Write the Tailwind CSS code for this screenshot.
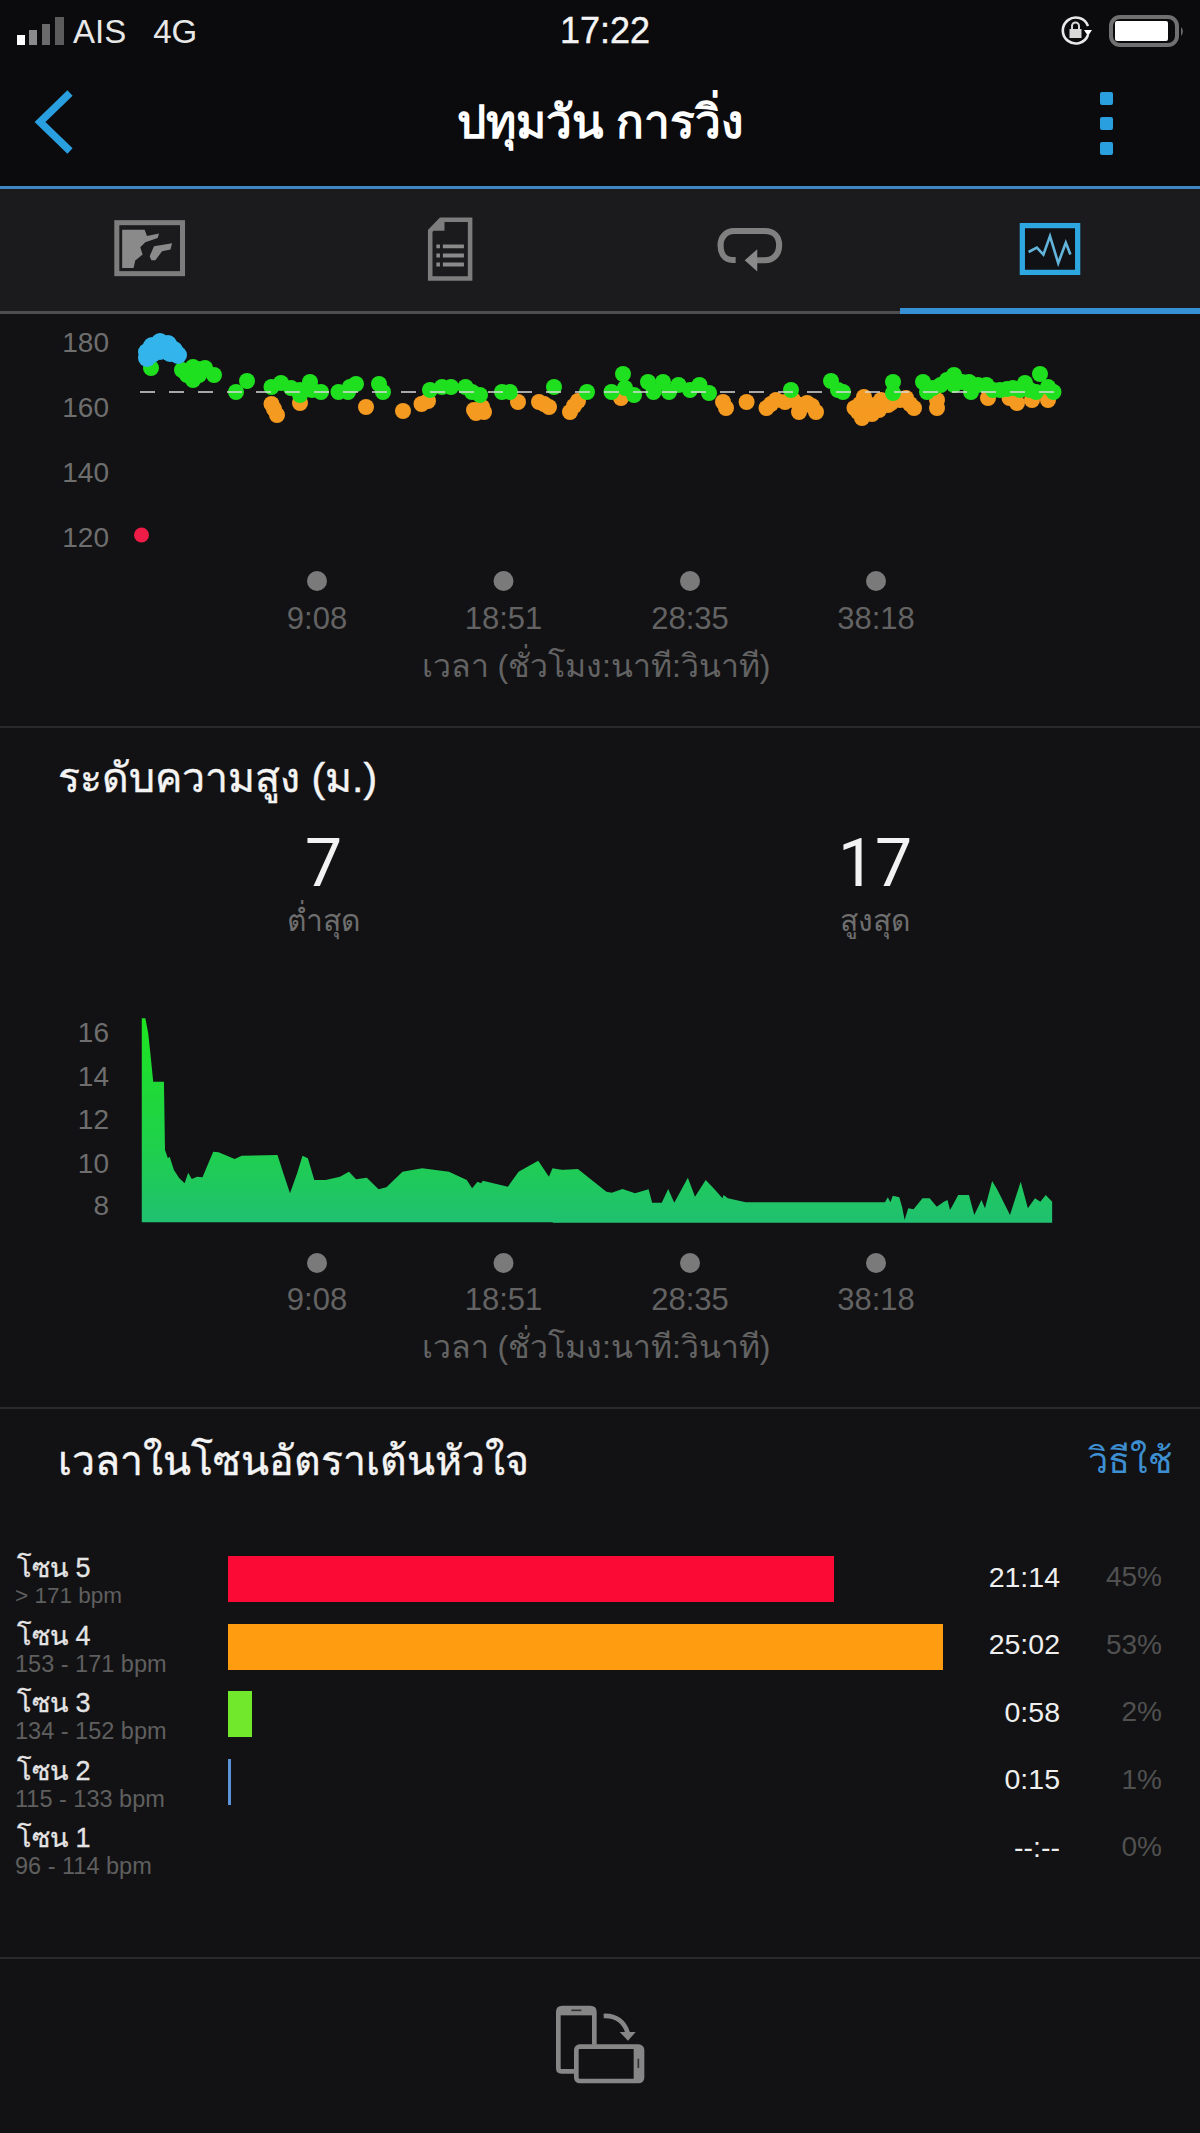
<!doctype html>
<html><head><meta charset="utf-8"><script src="https://cdn.jsdelivr.net/npm/@tailwindcss/browser@4"></script></head>
<body class="bg-[#121214] text-white font-['Liberation_Sans',sans-serif]">
<div class="w-[1200px] h-[2133px] overflow-hidden">
<!-- status + header -->
<div class="bg-[#0b0b0d]">
  <div class="h-[62px] grid grid-cols-3 items-center">
    <div class="flex items-center pl-[17px]">
      <svg width="48" height="30" viewBox="0 0 48 30"><rect x="0" y="19" width="8" height="10" fill="#fff"/><rect x="12" y="14" width="8" height="15" fill="#8a8a8a"/><rect x="25" y="8" width="8" height="21" fill="#6b6b6b"/><rect x="38" y="1" width="9" height="28" fill="#5c5c5c"/></svg>
      <span class="ml-[8px] text-[33px] leading-none text-[#e8e8e8]">AIS</span>
      <span class="ml-[27px] text-[33px] leading-none text-[#e8e8e8]">4G</span>
    </div>
    <div class="text-center text-[36px] leading-none text-[#f4f4f4] pl-[10px] [-webkit-text-stroke:0.4px_#f4f4f4]">17:22</div>
    <div class="flex items-center justify-end pr-[14px] gap-[17px]">
      <svg width="32" height="32" viewBox="0 0 32 32"><path d="M28 20 A13 13 0 1 1 28 11" fill="none" stroke="#e8e8e8" stroke-width="2.6"/><path d="M24 15 L32 15 L28 21 Z" fill="#fff"/><rect x="9.5" y="14" width="12" height="9" fill="#d8d8d8"/><path d="M12 14 V11 A3.5 3.5 0 0 1 19 11 V14" fill="none" stroke="#d8d8d8" stroke-width="2"/></svg>
      <svg width="77" height="32" viewBox="0 0 77 32"><rect x="2" y="2" width="66" height="28" rx="9" fill="none" stroke="#707070" stroke-width="4"/><rect x="6" y="6" width="53" height="20" rx="2" fill="#fff"/><path d="M72 12 Q76 16 72 21 Z" fill="#6a6a6a"/></svg>
    </div>
  </div>
  <div class="h-[124px] relative flex items-center justify-center">
    <svg class="absolute left-[34px] top-[28px]" width="40" height="64" viewBox="0 0 40 64"><path d="M36 3 L6 32 L36 61" fill="none" stroke="#2a9fe0" stroke-width="7.5"/></svg>
    <div class="text-[46px] leading-none font-bold text-white -mt-[4px]">ปทุมวัน การวิ่ง</div>
    <div class="absolute left-[1100px] top-[30px] flex flex-col gap-[12px]">
      <div class="w-[13px] h-[13px] rounded-[2px] bg-[#2a9fe0]"></div><div class="w-[13px] h-[13px] rounded-[2px] bg-[#2a9fe0]"></div><div class="w-[13px] h-[13px] rounded-[2px] bg-[#2a9fe0]"></div>
    </div>
  </div>
</div>
<div class="h-[3px] bg-[#3f86c4]"></div>
<!-- tabs -->
<div class="h-[125px] grid grid-cols-4 bg-[#1b1b1d]">
  <div class="flex items-center justify-center border-b-[3px] border-[#4e4e50] pb-[3px]">
    <svg width="72" height="57" viewBox="44 44 214 170"><rect x="52" y="52" width="196" height="152" fill="none" stroke="#7d7d7d" stroke-width="15"/><path d="M68 73 L135 73 L142 92 L178 84 L174 98 L137 110 L122 125 L129 147 L107 165 L102 187 L68 187 Z" fill="#8a8a8a"/><path d="M150 152 L163 122 L217 113 L212 132 L187 137 L167 164 L155 164 Z" fill="#8a8a8a"/></svg>
  </div>
  <div class="flex items-center justify-center border-b-[3px] border-[#4e4e50] pb-[3px]">
    <svg width="48" height="68" viewBox="978 26 148 204"><path d="M991 72 L1024 38 H1114 V219 H991 Z" fill="none" stroke="#7d7d7d" stroke-width="14"/><path d="M985 72 L1035 72 L1035 32 Z" fill="#7d7d7d"/><path d="M1030 120 H1095 M1030 148 H1095 M1030 176 H1095" stroke="#8a8a8a" stroke-width="12"/><path d="M1010 120 H1021 M1010 148 H1021 M1010 176 H1021" stroke="#8a8a8a" stroke-width="12"/></svg>
  </div>
  <div class="flex items-center justify-center border-b-[3px] border-[#4e4e50] pb-[3px]">
    <svg width="66" height="48" viewBox="47 64 205 146"><path d="M105 171 H95 C70 171 58 150 58 125 C58 100 75 81 100 81 H195 C225 81 240 100 240 125 C240 150 225 172 195 172 H160" fill="none" stroke="#808080" stroke-width="19"/><path d="M133 172 L172 138 L172 207 Z" fill="#8a8a8a"/></svg>
  </div>
  <div class="flex items-center justify-center border-b-[6px] border-[#3590d6] pb-0">
    <svg width="64" height="54" viewBox="955 47 190 164"><rect x="966" y="58" width="168" height="142" fill="#0f1114" stroke="#2ea6e0" stroke-width="16"/><polyline points="985,138 1010,125 1030,146 1050,90 1075,172 1098,110 1112,146" fill="none" stroke="#62b4da" stroke-width="8"/></svg>
  </div>
</div>
<!-- heart-rate chart -->
<svg class="block" width="1200" height="412" viewBox="0 314 1200 412" font-family="'Liberation Sans',sans-serif">
  <g fill="#6e6e6e" font-size="28" text-anchor="end"><text x="109" y="352">180</text><text x="109" y="417">160</text><text x="109" y="482">140</text><text x="109" y="547">120</text></g>
  <g fill="#f59a20" class="[&>circle]:[r:8px]">
    <circle cx="271.5" cy="404" r="7"/><circle cx="277" cy="415" r="7"/><circle cx="274" cy="409" r="7"/><circle cx="300" cy="403" r="7"/><circle cx="366" cy="407" r="7"/><circle cx="403" cy="411" r="7.5"/><circle cx="421.5" cy="404" r="7"/><circle cx="428" cy="401" r="7"/><circle cx="474" cy="410" r="7.5"/><circle cx="482" cy="407" r="7.5"/><circle cx="476" cy="413" r="7"/><circle cx="484" cy="412" r="7"/><circle cx="518" cy="402" r="7"/><circle cx="539" cy="402" r="7"/><circle cx="544" cy="404" r="7"/><circle cx="549" cy="407" r="7"/><circle cx="570" cy="412" r="7"/><circle cx="574" cy="406" r="7"/><circle cx="578" cy="401" r="7"/><circle cx="621" cy="398" r="7"/><circle cx="723" cy="402" r="7"/><circle cx="726" cy="408" r="7"/><circle cx="746.6" cy="402" r="7"/><circle cx="766.5" cy="408" r="7"/><circle cx="771" cy="404" r="7"/><circle cx="776" cy="400" r="7"/><circle cx="793" cy="400" r="7"/><circle cx="799" cy="412" r="7"/><circle cx="807" cy="403" r="7"/><circle cx="816" cy="412" r="7"/><circle cx="800" cy="405" r="7"/><circle cx="812" cy="406" r="7"/><circle cx="785" cy="402" r="7"/><circle cx="854.5" cy="408" r="7"/><circle cx="862" cy="418" r="7"/><circle cx="858" cy="412" r="7"/><circle cx="864" cy="397" r="7"/><circle cx="868" cy="410" r="7.5"/><circle cx="860" cy="404" r="7"/><circle cx="866" cy="403" r="7"/><circle cx="872" cy="414" r="7"/><circle cx="879" cy="410" r="7"/><circle cx="881" cy="400" r="7"/><circle cx="875" cy="405" r="7"/><circle cx="888" cy="405" r="7"/><circle cx="891" cy="403" r="7"/><circle cx="900" cy="400" r="7"/><circle cx="906" cy="398" r="7"/><circle cx="910" cy="404" r="7"/><circle cx="914" cy="408" r="7"/><circle cx="937" cy="408" r="7"/><circle cx="937" cy="400" r="7"/><circle cx="988" cy="398" r="7"/><circle cx="1017" cy="403" r="7"/><circle cx="1009.5" cy="398" r="7"/><circle cx="1032" cy="400" r="7"/><circle cx="1048" cy="400" r="7"/>
  </g>
  <g fill="#1fe01f" class="[&>circle]:[r:8px]">
    <circle cx="151" cy="368" r="6"/><circle cx="182" cy="370" r="7"/><circle cx="193" cy="367" r="7"/><circle cx="205" cy="368" r="7"/><circle cx="214" cy="375" r="7"/><circle cx="193" cy="380" r="7"/><circle cx="187" cy="375" r="7"/><circle cx="199" cy="375" r="7"/><circle cx="190" cy="372" r="7"/><circle cx="198" cy="369" r="7"/>
    <circle cx="236" cy="392" r="7"/><circle cx="247" cy="381" r="7"/><circle cx="271.5" cy="387" r="7"/><circle cx="281" cy="383" r="7"/><circle cx="291" cy="388" r="7"/><circle cx="300" cy="390" r="7"/><circle cx="300" cy="395" r="7"/><circle cx="310" cy="382" r="7"/><circle cx="312" cy="390" r="7"/><circle cx="321" cy="392" r="7"/><circle cx="338.5" cy="392" r="7"/><circle cx="348" cy="392" r="7"/><circle cx="356" cy="384" r="7"/><circle cx="350" cy="387" r="7"/><circle cx="379" cy="384" r="7"/><circle cx="383" cy="392" r="7"/><circle cx="430" cy="390" r="7"/><circle cx="442" cy="387" r="7"/><circle cx="451" cy="387" r="7"/><circle cx="465.5" cy="387" r="7"/><circle cx="472" cy="392" r="7"/><circle cx="480" cy="395" r="7"/><circle cx="502" cy="392" r="7"/><circle cx="510" cy="392" r="7"/><circle cx="554" cy="387" r="7"/><circle cx="587" cy="392" r="7"/>
    <circle cx="611.5" cy="392" r="7"/><circle cx="623" cy="374" r="7"/><circle cx="625" cy="388" r="7"/><circle cx="634" cy="395" r="7"/><circle cx="648" cy="382" r="7"/><circle cx="653.5" cy="392" r="7"/><circle cx="663" cy="382" r="7"/><circle cx="669" cy="392" r="7"/><circle cx="678.5" cy="385" r="7"/><circle cx="690" cy="390" r="7"/><circle cx="699.5" cy="385" r="7"/><circle cx="709" cy="393" r="7"/><circle cx="791" cy="390" r="7"/><circle cx="831" cy="381" r="7"/><circle cx="838" cy="390" r="7"/><circle cx="843" cy="392" r="7"/><circle cx="893" cy="382" r="7"/><circle cx="893" cy="393" r="7"/><circle cx="923" cy="382" r="7"/><circle cx="927" cy="392" r="7"/><circle cx="933" cy="388" r="7"/><circle cx="940.6" cy="385" r="7"/><circle cx="947" cy="380" r="7"/><circle cx="954" cy="375" r="7"/><circle cx="954" cy="385" r="7"/><circle cx="962" cy="382" r="7"/><circle cx="969" cy="382" r="7"/><circle cx="971" cy="392" r="7"/><circle cx="978" cy="385" r="7"/><circle cx="986.5" cy="385" r="7"/><circle cx="993" cy="390" r="7"/><circle cx="1000" cy="390" r="7"/><circle cx="1007" cy="389" r="7"/><circle cx="1013" cy="388" r="7"/><circle cx="1025" cy="383" r="7"/><circle cx="1020" cy="390" r="7"/><circle cx="1030" cy="390" r="7"/><circle cx="1040" cy="374" r="7"/><circle cx="1036" cy="392" r="7"/><circle cx="1053.5" cy="392" r="7"/><circle cx="1048" cy="387" r="7"/>
  </g>
  <g fill="#33b5ec" class="[&>circle]:[r:9px]">
    <circle cx="147" cy="352" r="7"/><circle cx="147" cy="358" r="7"/><circle cx="152" cy="346" r="7"/><circle cx="160" cy="342" r="7"/><circle cx="168" cy="344" r="7"/><circle cx="174" cy="350" r="7"/><circle cx="178" cy="355" r="7"/><circle cx="160" cy="351" r="7"/><circle cx="170" cy="353" r="7"/><circle cx="152" cy="354" r="7"/>
  </g>
  <line x1="140" y1="392" x2="1062" y2="392" stroke="#d9d9d9" stroke-opacity=".75" stroke-width="2" stroke-dasharray="15 14"/>
  <circle cx="141.5" cy="535" r="7.5" fill="#ee1c46"/>
  <g fill="#7a7a7a"><circle cx="317" cy="581" r="10"/><circle cx="503.5" cy="581" r="10"/><circle cx="690" cy="581" r="10"/><circle cx="876" cy="581" r="10"/></g>
  <g fill="#636363" font-size="31" text-anchor="middle"><text x="317" y="629">9:08</text><text x="503.5" y="629">18:51</text><text x="690" y="629">28:35</text><text x="876" y="629">38:18</text><text x="596" y="677" font-size="32">เวลา (ชั่วโมง:นาที:วินาที)</text></g>
</svg>
<!-- elevation -->
<div class="border-t-[2px] border-[#2a2a2c]">
  <div class="h-[100px] flex items-center pl-[58px] text-[41px] leading-none text-[#f4f4f4] [-webkit-text-stroke:0.4px_#f4f4f4]">ระดับความสูง (ม.)</div>
  <div class="h-[122px] grid grid-cols-[647px_456px]">
    <div class="text-center"><div class="h-[64px] mt-[3px] flex items-center justify-center text-[66px] font-['Roboto',sans-serif] text-[#f2f2f2]">7</div><div class="mt-[3px] h-[44px] flex items-center justify-center text-[30px] text-[#6e6e6e]">ต่ำสุด</div></div>
    <div class="text-center"><div class="h-[64px] mt-[3px] flex items-center justify-center text-[66px] font-['Roboto',sans-serif] text-[#f2f2f2]">17</div><div class="mt-[3px] h-[44px] flex items-center justify-center text-[30px] text-[#6e6e6e]">สูงสุด</div></div>
  </div>
  <svg class="block" width="1200" height="457" viewBox="0 950 1200 457" font-family="'Liberation Sans',sans-serif">
    <defs>
      <linearGradient id="a1" gradientUnits="userSpaceOnUse" x1="0" y1="60" x2="0" y2="697"><stop offset="0" stop-color="#1ee61e"/><stop offset=".65" stop-color="#1fd04c"/><stop offset="1" stop-color="#20c070"/></linearGradient>
      <linearGradient id="a2" gradientUnits="userSpaceOnUse" x1="0" y1="-330" x2="0" y2="308"><stop offset="0" stop-color="#1ee61e"/><stop offset=".65" stop-color="#1fd04c"/><stop offset="1" stop-color="#20c070"/></linearGradient>
    </defs>
    <g fill="#6e6e6e" font-size="28" text-anchor="end"><text x="109" y="1042">16</text><text x="109" y="1086">14</text><text x="109" y="1129">12</text><text x="109" y="1173">10</text><text x="109" y="1215">8</text></g>
    <g transform="translate(40 990) scale(0.35714 0.33333)"><polygon fill="url(#a1)" points="285,697 285,85 295,85 303,130 310,200 317,275 347,275 350,480 358,505 363,500 375,540 390,565 405,580 415,548 425,567 440,560 455,562 485,485 500,487 545,507 565,497 665,495 680,545 700,610 720,550 735,497 750,505 768,570 800,570 840,560 865,545 885,568 915,563 948,598 970,592 1015,545 1070,535 1145,545 1195,570 1210,595 1225,575 1235,580 1240,572 1310,590 1340,545 1395,512 1425,560 1435,535 1480,543 1456,697"/></g>
    <g transform="translate(560 1120) scale(0.35714 0.33333)"><polygon fill="url(#a2)" points="-20,150 0,150 50,147 130,215 145,218 175,207 210,220 248,208 258,248 285,248 303,207 320,248 358,173 378,230 408,180 430,205 455,235 458,225 470,235 520,247 910,247 918,232 925,247 932,227 950,232 958,262 965,300 975,265 990,268 1015,235 1035,235 1055,260 1075,245 1085,240 1092,270 1100,255 1115,225 1145,225 1160,285 1180,240 1190,265 1210,183 1225,210 1260,285 1290,185 1310,265 1330,235 1345,245 1360,225 1378,245 1378,308 -20,308"/></g>
    <g fill="#7a7a7a"><circle cx="317" cy="1263" r="10"/><circle cx="503.5" cy="1263" r="10"/><circle cx="690" cy="1263" r="10"/><circle cx="876" cy="1263" r="10"/></g>
    <g fill="#636363" font-size="31" text-anchor="middle"><text x="317" y="1310">9:08</text><text x="503.5" y="1310">18:51</text><text x="690" y="1310">28:35</text><text x="876" y="1310">38:18</text><text x="596" y="1358" font-size="32">เวลา (ชั่วโมง:นาที:วินาที)</text></g>
  </svg>
</div>
<!-- zones -->
<div class="border-t-[2px] border-[#2a2a2c]">
  <div class="h-[104px] flex items-center justify-between pl-[58px] pr-[28px]"><span class="text-[41px] leading-none text-[#f4f4f4] [-webkit-text-stroke:0.4px_#f4f4f4]">เวลาในโซนอัตราเต้นหัวใจ</span><span class="text-[36px] leading-none text-[#3d8fd1]">วิธีใช้</span></div>
  <div class="mt-[43px] pr-[38px]">
    <div class="h-[67.6px] grid grid-cols-[228px_1fr_100px_102px]">
      <div class="pl-[15px] -mt-[2px]"><div class="pl-[2px] text-[27px] leading-[28px] text-[#e4e4e4] [-webkit-text-stroke:0.3px_#e4e4e4]">โซน 5</div><div class="text-[22.5px] leading-[28px] text-[#5f5f5f]">&gt; 171 bpm</div></div>
      <div><div class="w-[606px] h-[46px] bg-[#fb0a36]"></div></div>
      <div class="h-[42px] flex items-center justify-end text-[28.5px] text-[#efefef]">21:14</div>
      <div class="h-[42px] flex items-center justify-end text-[28px] text-[#505050]">45%</div>
    </div>
    <div class="h-[67.6px] grid grid-cols-[228px_1fr_100px_102px]">
      <div class="pl-[15px] -mt-[2px]"><div class="pl-[2px] text-[27px] leading-[28px] text-[#e4e4e4] [-webkit-text-stroke:0.3px_#e4e4e4]">โซน 4</div><div class="text-[23.5px] leading-[28px] text-[#5f5f5f]">153 - 171 bpm</div></div>
      <div><div class="w-[715px] h-[46px] bg-[#ff9c10]"></div></div>
      <div class="h-[42px] flex items-center justify-end text-[28.5px] text-[#efefef]">25:02</div>
      <div class="h-[42px] flex items-center justify-end text-[28px] text-[#505050]">53%</div>
    </div>
    <div class="h-[67.6px] grid grid-cols-[228px_1fr_100px_102px]">
      <div class="pl-[15px] -mt-[2px]"><div class="pl-[2px] text-[27px] leading-[28px] text-[#e4e4e4] [-webkit-text-stroke:0.3px_#e4e4e4]">โซน 3</div><div class="text-[23.5px] leading-[28px] text-[#5f5f5f]">134 - 152 bpm</div></div>
      <div><div class="w-[24px] h-[46px] bg-[#72e82c]"></div></div>
      <div class="h-[42px] flex items-center justify-end text-[28.5px] text-[#efefef]">0:58</div>
      <div class="h-[42px] flex items-center justify-end text-[28px] text-[#505050]">2%</div>
    </div>
    <div class="h-[67.6px] grid grid-cols-[228px_1fr_100px_102px]">
      <div class="pl-[15px] -mt-[2px]"><div class="pl-[2px] text-[27px] leading-[28px] text-[#e4e4e4] [-webkit-text-stroke:0.3px_#e4e4e4]">โซน 2</div><div class="text-[23.5px] leading-[28px] text-[#5f5f5f]">115 - 133 bpm</div></div>
      <div><div class="w-[3px] h-[46px] bg-[#5b92d8]"></div></div>
      <div class="h-[42px] flex items-center justify-end text-[28.5px] text-[#efefef]">0:15</div>
      <div class="h-[42px] flex items-center justify-end text-[28px] text-[#505050]">1%</div>
    </div>
    <div class="h-[67.6px] grid grid-cols-[228px_1fr_100px_102px]">
      <div class="pl-[15px] -mt-[2px]"><div class="pl-[2px] text-[27px] leading-[28px] text-[#e4e4e4] [-webkit-text-stroke:0.3px_#e4e4e4]">โซน 1</div><div class="text-[23.5px] leading-[28px] text-[#5f5f5f]">96 - 114 bpm</div></div>
      <div></div>
      <div class="h-[42px] flex items-center justify-end text-[28.5px] text-[#efefef]">--:--</div>
      <div class="h-[42px] flex items-center justify-end text-[28px] text-[#505050]">0%</div>
    </div>
  </div>
  <div class="h-[63px]"></div>
</div>
<!-- footer -->
<div class="border-t-[2px] border-[#2a2a2c] h-[174px] flex items-center justify-center">
  <svg width="95" height="85" viewBox="460 250 285 255"><path d="M528 458 H485 Q476 458 476 449 V280 Q476 268 488 268 H572 Q584 268 584 280 V378" fill="none" stroke="#868686" stroke-width="14"/><rect x="480" y="270" width="100" height="20" fill="#868686"/><path d="M515 275 H545" stroke="#333" stroke-width="5"/><rect x="530" y="384" width="197" height="103" rx="10" fill="#121214" stroke="#868686" stroke-width="14"/><path d="M702 390 V481 L727 481 V390 Z" fill="#868686"/><path d="M716 420 V448" stroke="#333" stroke-width="5"/><path d="M612 292 C650 290 675 310 685 345" fill="none" stroke="#868686" stroke-width="14"/><path d="M660 340 H708 L685 366 Z" fill="#868686"/></svg>
</div>
</div>
</body></html>
